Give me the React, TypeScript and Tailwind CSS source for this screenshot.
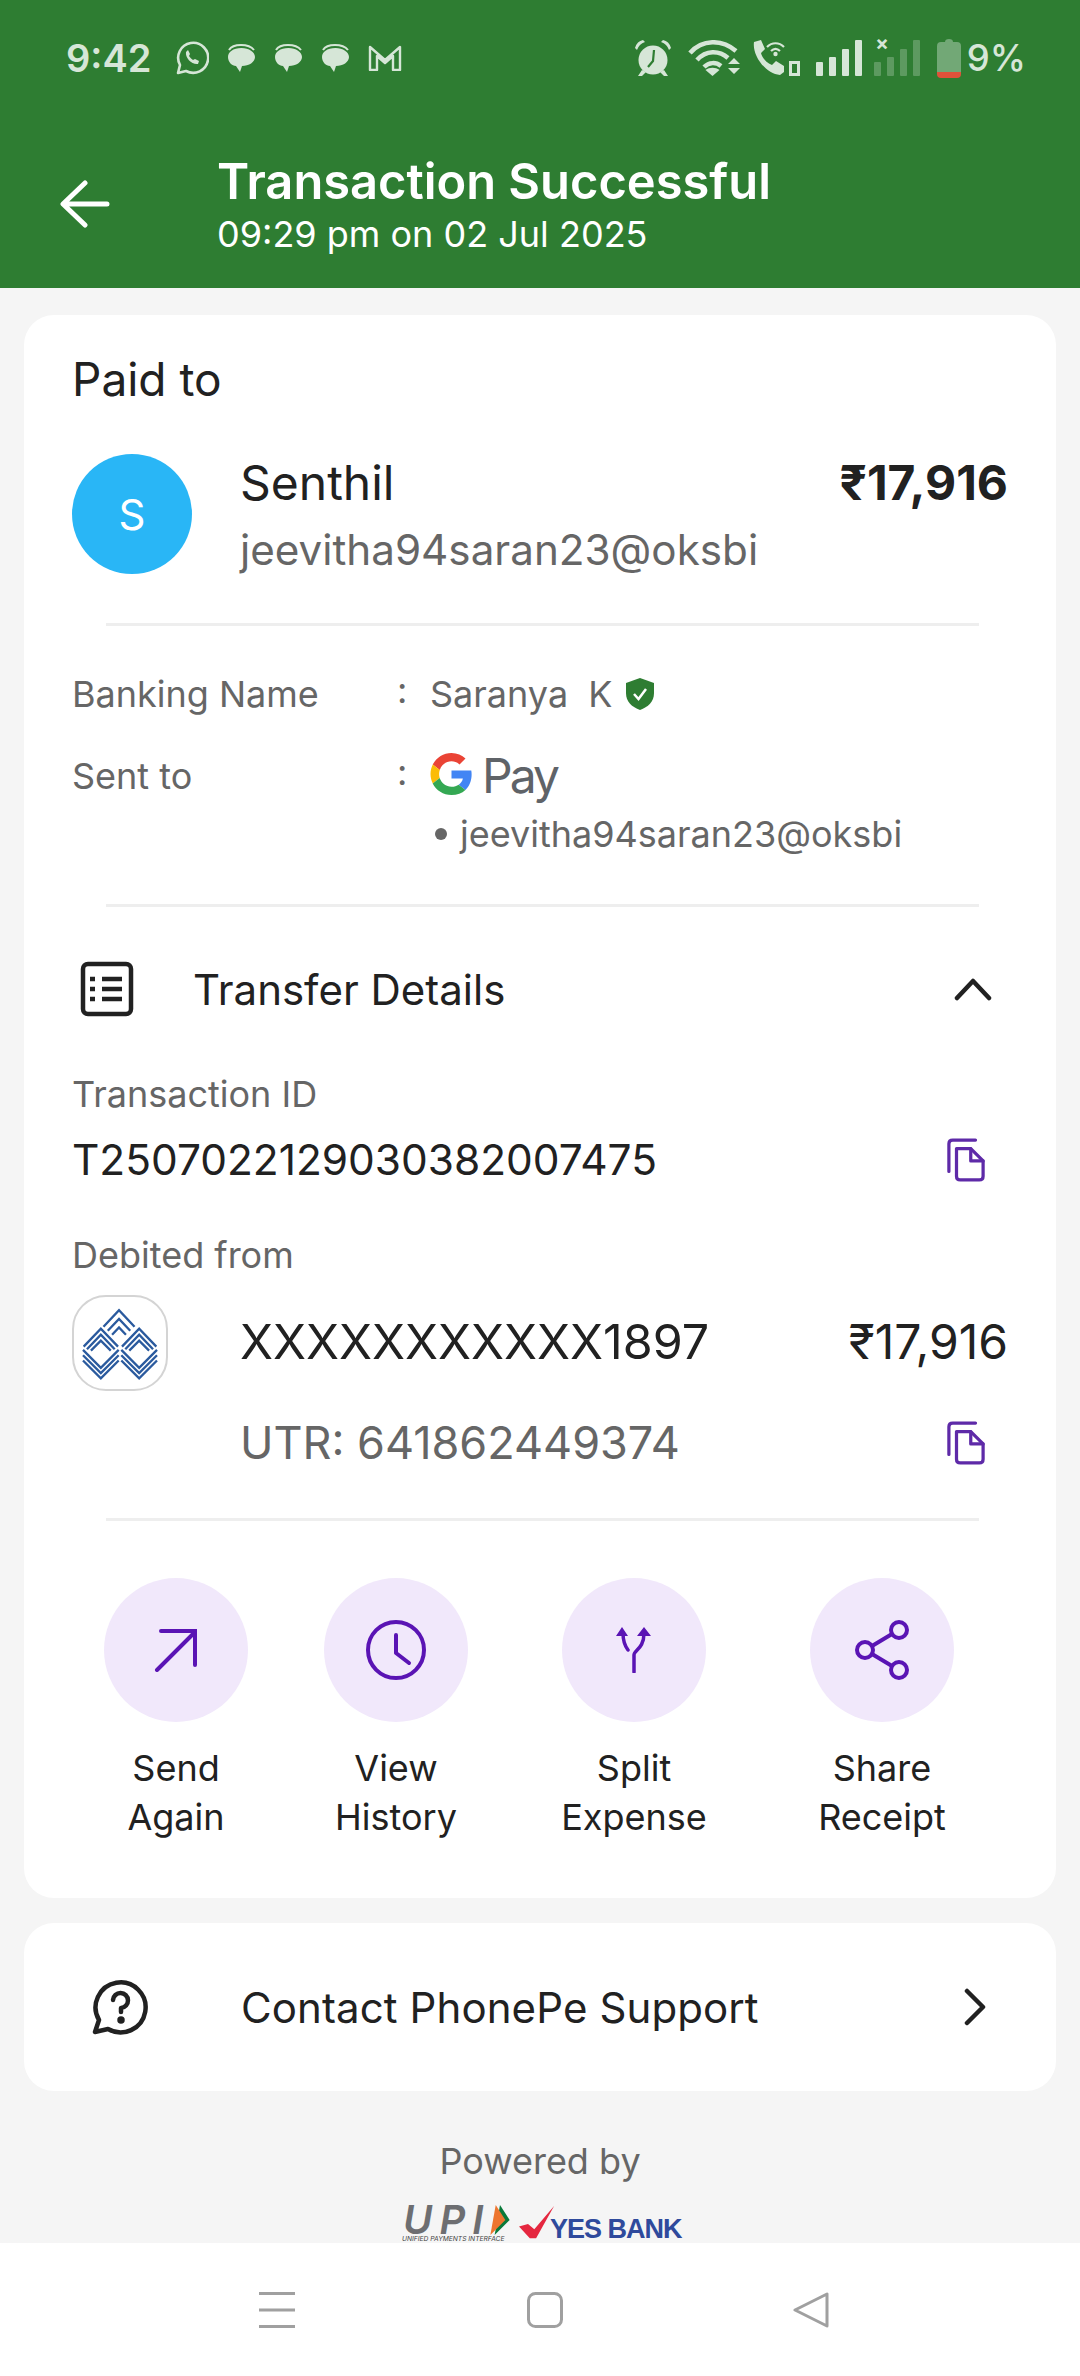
import React from "react";

const Copy = () => (
  <svg width="38" height="46" viewBox="0 0 40 46" fill="none" stroke="#5e2aa8" strokeWidth="3.4" strokeLinejoin="round" strokeLinecap="round">
    <path d="M30 2H6Q2 2 2 6V35" />
    <path d="M10 11H25L38 24V40Q38 44 34 44H14Q10 44 10 40Z" />
    <path d="M25 11V24H38" />
  </svg>
);

const Whats = () => (
  <svg width="34" height="35" viewBox="0 0 34 35" fill="none" stroke="#d6e6d7" strokeWidth="2.6">
    <path d="M3 32l2-8a15 15 0 1 1 6 6z" strokeLinejoin="round" />
    <path d="M11 11c-1 6 6 13 12 12l1-3-4-2-2 1c-2-1-3-3-4-4l1-2-2-4z" fill="#d6e6d7" stroke="none" />
  </svg>
);

const Bubble = () => (
  <svg width="29" height="29" viewBox="0 0 29 29">
    <path d="M2 6Q5 1 14 1T27 6" fill="none" stroke="#d6e6d7" strokeWidth="2" />
    <path d="M14.500 4C6 4 1 8 1 13s4 9 8 9l4 6 2-6c7 0 13-4 13-9S22 4 14.500 4z" fill="#d6e6d7" />
  </svg>
);

const Gmail = () => (
  <svg width="34" height="26" viewBox="0 0 34 26" fill="none" stroke="#d6e6d7" strokeWidth="2.400" strokeLinejoin="round">
    <path d="M2 25V2l15 13L32 2v23h-7V11l-8 7-8-7v14z" />
  </svg>
);

const Alarm = () => (
  <svg width="38" height="38" viewBox="0 0 38 38" fill="#d6e6d7">
    <circle cx="19" cy="21" r="14.500" />
    <path d="M1 9Q3 2 9 1l2 2Q5 5 3 11zM37 9Q35 2 29 1l-2 2q6 2 8 8zM8 31l-4 6h4l4-4zM30 31l4 6h-4l-4-4z" />
    <path d="M20 11l-1 11-5 6" fill="none" stroke="#2e7d32" strokeWidth="2.200" />
  </svg>
);

const Wifi = () => (
  <svg width="52" height="36" viewBox="0 0 52 36" fill="none" stroke="#d6e6d7" strokeWidth="4.500">
    <path d="M2 13C14 -1 34 -1 48 11" />
    <path d="M9 20C18 10 31 10 40 18" />
    <path d="M16 27c5-5 12-5 17-1" />
    <path d="M24.500 36l-7-6c4-3 10-3 14 0z" fill="#d6e6d7" stroke="none" />
    <path d="M46 18l6 6H40zM40 28h12l-6 6z" fill="#d6e6d7" stroke="none" />
  </svg>
);

const Call = () => (
  <svg width="48" height="36" viewBox="0 0 48 36" fill="#d6e6d7">
    <path d="M2 2l7-2 4 9-4 4c1 5 6 10 11 12l4-4 8 5v6l-4 3C14 34 0 16 2 2z" />
    <g fill="none" stroke="#d6e6d7" strokeWidth="2.200">
      <path d="M15 7c5-5 12-5 17 0" />
      <path d="M19 11c3-3 6-3 9 0" />
    </g>
    <circle cx="23.500" cy="14" r="2.200" />
    <path d="M37 21h11v15H37zM40 24v9h5v-9z" fillRule="evenodd" />
  </svg>
);

const Signal = ({ dim }: { dim?: boolean }) => (
  <svg width="46" height="36" viewBox="0 0 46 36" fill="#d6e6d7" opacity={dim ? 0.28 : 1}>
    <rect x="0" y="22" width="7" height="14" rx="1" />
    <rect x="13" y="17" width="7" height="19" rx="1" />
    <rect x="26" y="9" width="7" height="27" rx="1" />
    <rect x="39" y="0" width="7" height="36" rx="1" />
  </svg>
);

const Battery = () => (
  <svg width="24" height="39" viewBox="0 0 24 39">
    <path d="M8 3Q8 0 12 0T16 3H20Q24 3 24 7V33H0V7Q0 3 4 3z" fill="#72a876" />
    <path d="M0 33H24V35Q24 39 20 39H4Q0 39 0 35z" fill="#e0523a" />
  </svg>
);

const Round = ({ ml, l1, l2, children }: { ml: string; l1: string; l2: string; children: React.ReactNode }) => (
  <div className={`flex w-[144px] shrink-0 flex-col items-center ${ml}`}>
    <div className="flex h-[144px] w-[144px] items-center justify-center rounded-full bg-[#f1e8fb]">{children}</div>
    <div className="mt-[22px] whitespace-nowrap text-center text-[36px] leading-[49px] text-[#212121]">
      {l1}
      <br />
      {l2}
    </div>
  </div>
);

const Divider = ({ mt }: { mt: string }) => <div className={`ml-[82px] mr-[77px] h-[3px] bg-[#eeeeee] ${mt}`} />;

const IOB = () => (
  <div className="flex h-[96px] w-[96px] shrink-0 items-center justify-center rounded-[34px] border-2 border-[#d4d4d4] bg-white">
    <svg width="76" height="74" viewBox="95 110 230 218" fill="none" stroke="#2a5a9e" strokeWidth="7">
      <path d="M160 170L207 120L254 170M173 182L207 146L241 182M186 194L207 172L228 194" />
      <path d="M100 230L152 176L204 230M110 238L152 194L194 238M122 242L152 212L182 242" />
      <path d="M216 230L268 176L320 230M226 238L268 194L310 238M238 242L268 212L298 242" />
      <path d="M98 240L152 294L206 240M98 256L152 310L206 256M98 272L152 326L206 272" />
      <path d="M214 240L268 294L322 240M214 256L268 310L322 256M214 272L268 326L322 272" />
    </svg>
  </div>
);

export default function App() {
  return (
    <div className="flex h-[2376px] w-[1080px] flex-col overflow-hidden bg-[#f5f5f5] font-['Inter',sans-serif] text-[#212121]">
      <header className="h-[288px] shrink-0 bg-[#2e7d32]">
        <div className="flex h-[118px] items-center pb-[2px] pl-[66px] pr-[54px]">
          <span className="text-[38px] font-semibold leading-none text-[#d6e6d7]">9:42</span>
          <div className="ml-[24px] flex items-center gap-[18px]">
            <Whats />
            <Bubble />
            <Bubble />
            <Bubble />
            <Gmail />
          </div>
          <div className="ml-auto flex items-center">
            <Alarm />
            <div className="ml-[16px]"><Wifi /></div>
            <div className="ml-[12px]"><Call /></div>
            <div className="ml-[16px]"><Signal /></div>
            <div className="relative ml-[12.500px]">
              <Signal dim />
              <span className="absolute left-[1px] top-[-7px] text-[20px] font-bold leading-none text-[#d6e6d7]">×</span>
            </div>
            <div className="ml-[17px]"><Battery /></div>
            <span className="ml-[5.500px] text-[36.500px] font-medium leading-none text-[#d6e6d7]">9%</span>
          </div>
        </div>
        <div className="mt-[35px] flex items-start pl-[60px]">
          <svg className="mt-[27px]" width="50" height="48" viewBox="0 0 50 48" fill="none" stroke="#fff" strokeWidth="5" strokeLinecap="round" strokeLinejoin="round">
            <path d="M47 24H4M25 3L3 24L25 45" />
          </svg>
          <div className="ml-[107px]">
            <div className="h-[58px] whitespace-nowrap text-[48.800px] font-semibold leading-[58px] text-white">Transaction Successful</div>
            <div className="mt-[3px] h-[40px] whitespace-nowrap text-[36px] leading-[40px] text-white">09:29 pm on 02 Jul 2025</div>
          </div>
        </div>
      </header>

      <main className="min-h-0 flex-1 overflow-hidden px-[24px] pt-[27px]">
        <section className="rounded-[30px] bg-white pb-[56px] pt-[32px]">
          <div className="h-[64px] px-[48px] text-[46px] leading-[64px]">Paid to</div>
          <div className="mt-[43px] flex h-[120px] pl-[48px] pr-[48px]">
            <div className="flex h-[120px] w-[120px] shrink-0 items-center justify-center rounded-full bg-[#29b6f6] text-[42px] text-white">S</div>
            <div className="ml-[48px] flex-1">
              <div className="flex h-[58px] items-center justify-between">
                <span className="text-[48px] leading-[58px]">Senthil</span>
                <span className="text-[48px] font-bold leading-[58px]">₹17,916</span>
              </div>
              <div className="mt-[9px] h-[53px] text-[42.200px] leading-[58px] text-[#666666]">jeevitha94saran23@oksbi</div>
            </div>
          </div>
          <Divider mt="mt-[49px]" />
          <div className="mt-[38px] flex h-[60px] items-center pl-[48px] text-[36px] text-[#666666]">
            <span className="w-[325px]">Banking Name</span>
            <span className="relative top-[-4px] w-[33px]">:</span>
            <span className="whitespace-pre">Saranya  K</span>
            <svg className="ml-[13px]" width="28" height="32" viewBox="0 0 28 32">
              <path d="M14 0L28 5V15C28 24 22 29 14 32C6 29 0 24 0 15V5Z" fill="#2e7d32" />
              <path d="M8 16L12.500 21L20 11" fill="none" stroke="#fff" strokeWidth="2.500" />
            </svg>
          </div>
          <div className="mt-[22px] flex h-[60px] items-center pl-[48px] text-[36px] text-[#666666]">
            <span className="w-[325px]">Sent to</span>
            <span className="relative top-[-4px] w-[33px]">:</span>
            <svg width="43" height="42" viewBox="0 0 48 48" className="relative top-[-2px]">
              <path fill="#EA4335" d="M24 9.500c3.500 0 6.700 1.200 9.200 3.600l6.800-6.800C35.900 2.400 30.500 0 24 0 14.600 0 6.500 5.400 2.600 13.200l8 6.200C12.400 13.700 17.700 9.500 24 9.500z" />
              <path fill="#4285F4" d="M47 24.500c0-1.600-.1-3.100-.4-4.500H24v9h13c-.6 3-2.300 5.500-4.800 7.200l7.700 6C44.300 38 47 31.800 47 24.500z" />
              <path fill="#FBBC05" d="M10.500 28.600C10 27.200 9.800 25.600 9.800 24s.3-3.200.8-4.600l-8-6.200C1 16.400 0 20.100 0 24s1 7.600 2.600 10.800z" />
              <path fill="#34A853" d="M24 48c6.500 0 11.900-2.100 15.900-5.800l-7.700-6c-2.200 1.500-4.900 2.300-8.200 2.300-6.300 0-11.600-4.200-13.500-9.900l-8 6.200C6.500 42.600 14.600 48 24 48z" />
            </svg>
            <span className="ml-[9px] text-[48px] font-normal leading-none tracking-[-3px] text-[#5f6368]">Pay</span>
          </div>
          <div className="flex h-[56px] items-center pl-[411px] text-[36px] text-[#666666]">
            <span className="mr-[13px] h-[12px] w-[12px] rounded-full bg-[#666666]" />
            <span>jeevitha94saran23@oksbi</span>
          </div>
          <Divider mt="mt-[42px]" />
          <div className="mt-[52px] flex h-[60px] items-center pl-[56px] pr-[64px]">
            <svg width="54" height="56" viewBox="0 0 54 56" fill="none" stroke="#212121" strokeWidth="4.500">
              <rect x="3" y="3" width="48" height="50" rx="5" />
              <path d="M22 18H42M22 28H42M22 38H42M10 18H15M10 28H15M10 38H15" />
            </svg>
            <span className="ml-[59px] text-[42px]">Transfer Details</span>
            <svg className="ml-auto" width="38" height="24" viewBox="0 0 38 24" fill="none" stroke="#212121" strokeWidth="4.500" strokeLinecap="round" strokeLinejoin="round">
              <path d="M3 21L19 4L35 21" />
            </svg>
          </div>
          <div className="mt-[47px] flex h-[56px] items-center pl-[48px] text-[36px] text-[#666666]">Transaction ID</div>
          <div className="mt-[8px] flex h-[60px] items-center pl-[48px] pr-[71px]">
            <span className="text-[42.400px]">T2507022129030382007475</span>
            <span className="ml-auto flex"><Copy /></span>
          </div>
          <div className="mt-[37px] flex h-[56px] items-center pl-[48px] text-[36px] text-[#666666]">Debited from</div>
          <div className="mt-[12px] flex pl-[48px] pr-[48px]">
            <IOB />
            <div className="ml-[72px] flex-1 pt-[17px]">
              <div className="flex h-[60px] items-center justify-between text-[48.400px]">
                <span>XXXXXXXXXXX1897</span>
                <span className="text-[48px]">₹17,916</span>
              </div>
              <div className="mt-[41px] flex h-[59px] items-center pr-[23px]">
                <span className="text-[45px] text-[#666666]">UTR: 641862449374</span>
                <span className="ml-auto flex"><Copy /></span>
              </div>
            </div>
          </div>
          <Divider mt="mt-[46px]" />
          <div className="mt-[57px] flex pl-[80px]">
            <Round ml="ml-0" l1="Send" l2="Again">
              <svg width="44" height="44" viewBox="0 0 44 44" fill="none" stroke="#5a14b4" strokeWidth="4" strokeLinecap="round">
                <path d="M3 42L41 4M7 3H41V37" />
              </svg>
            </Round>
            <Round ml="ml-[76px]" l1="View" l2="History">
              <svg width="60" height="60" viewBox="0 0 60 60" fill="none" stroke="#5a14b4" strokeWidth="4" strokeLinecap="round" strokeLinejoin="round">
                <circle cx="30" cy="30" r="28" />
                <path d="M30 15V33L43 43" />
              </svg>
            </Round>
            <Round ml="ml-[94px]" l1="Split" l2="Expense">
              <svg width="40" height="46" viewBox="0 0 40 46" fill="none" stroke="#5a14b4" strokeWidth="3.500" strokeLinecap="round">
                <path d="M20 45V28C20 23 30 22 30 6M9 6C9 15 11 19 14 23" />
                <path d="M30 0L37 9H23zM8 0L14 9H2z" fill="#5a14b4" stroke="none" />
              </svg>
            </Round>
            <Round ml="ml-[104px]" l1="Share" l2="Receipt">
              <svg width="54" height="60" viewBox="0 0 54 60" fill="none" stroke="#5a14b4" strokeWidth="4">
                <circle cx="44" cy="10" r="8" />
                <circle cx="10" cy="30" r="8" />
                <circle cx="44" cy="50" r="8" />
                <path d="M37 14L17 26M17 34L37 46" />
              </svg>
            </Round>
          </div>
        </section>

        <section className="mt-[25px] flex h-[168px] items-center rounded-[30px] bg-white pl-[68px] pr-[69px]">
          <svg width="56" height="56" viewBox="0 0 56 56" fill="none" stroke="#212121" strokeWidth="4.500" strokeLinecap="round" strokeLinejoin="round">
            <path d="M3 53L7 41A25 25 0 1 1 16 50Z" />
            <path d="M21 21A7.500 7.500 0 1 1 29 29V33" />
            <circle cx="29" cy="41" r="1.500" fill="#212121" />
          </svg>
          <span className="ml-[93px] text-[42px] tracking-[0.1px]">Contact PhonePe Support</span>
          <svg className="ml-auto" width="24" height="38" viewBox="0 0 24 38" fill="none" stroke="#212121" strokeWidth="4.500" strokeLinecap="round" strokeLinejoin="round">
            <path d="M4 3L20 19L4 35" />
          </svg>
        </section>

        <div className="mt-[42px] flex h-[56px] items-center justify-center text-[36px] text-[#666666]">Powered by</div>
        <div className="mt-[16px] flex h-[38px] items-start pl-[378px]">
          <div className="relative h-[38px] w-[108px] shrink-0">
            <span className="absolute left-[1px] top-0 text-[40px] font-semibold italic leading-[30px] tracking-[7px] text-[#6d6e71]">UPI</span>
            <span className="absolute left-0 top-[31px] whitespace-nowrap text-[6.700px] italic leading-[7px] text-[#444444]">UNIFIED PAYMENTS INTERFACE</span>
            <svg className="absolute left-[88px] top-0" width="20" height="30" viewBox="0 0 18 28">
              <path d="M9 0L18 14L4 28Z" fill="#097939" />
              <path d="M5 0L14 14L0 28Z" fill="#ed752e" />
            </svg>
          </div>
          <svg className="ml-[6px] shrink-0" width="42" height="36" viewBox="0 0 40 40">
            <path d="M0 24L10 21L17 27L39 1L19 37H12Z" fill="#e5273f" />
          </svg>
          <span className="ml-[-8px] mt-[11px] whitespace-nowrap font-['Liberation_Sans',sans-serif] text-[27px] font-bold leading-[26px] tracking-[-1px] text-[#2f4a9c]">YES BANK</span>
        </div>
      </main>

      <nav className="flex h-[133px] shrink-0 items-start bg-white pl-[259px] pt-[49px]">
        <svg width="36" height="36" viewBox="0 0 36 36" fill="#a0a0a0">
          <rect y="0" width="36" height="3" />
          <rect y="16.500" width="36" height="3" />
          <rect y="33" width="36" height="3" />
        </svg>
        <svg className="ml-[232px]" width="36" height="36" viewBox="0 0 36 36" fill="none" stroke="#a0a0a0" strokeWidth="3">
          <rect x="1.500" y="1.500" width="33" height="33" rx="7" />
        </svg>
        <svg className="ml-[230px]" width="36" height="36" viewBox="0 0 36 36" fill="none" stroke="#a0a0a0" strokeWidth="3" strokeLinejoin="round">
          <path d="M34 2V34L2 18Z" />
        </svg>
      </nav>
    </div>
  );
}
